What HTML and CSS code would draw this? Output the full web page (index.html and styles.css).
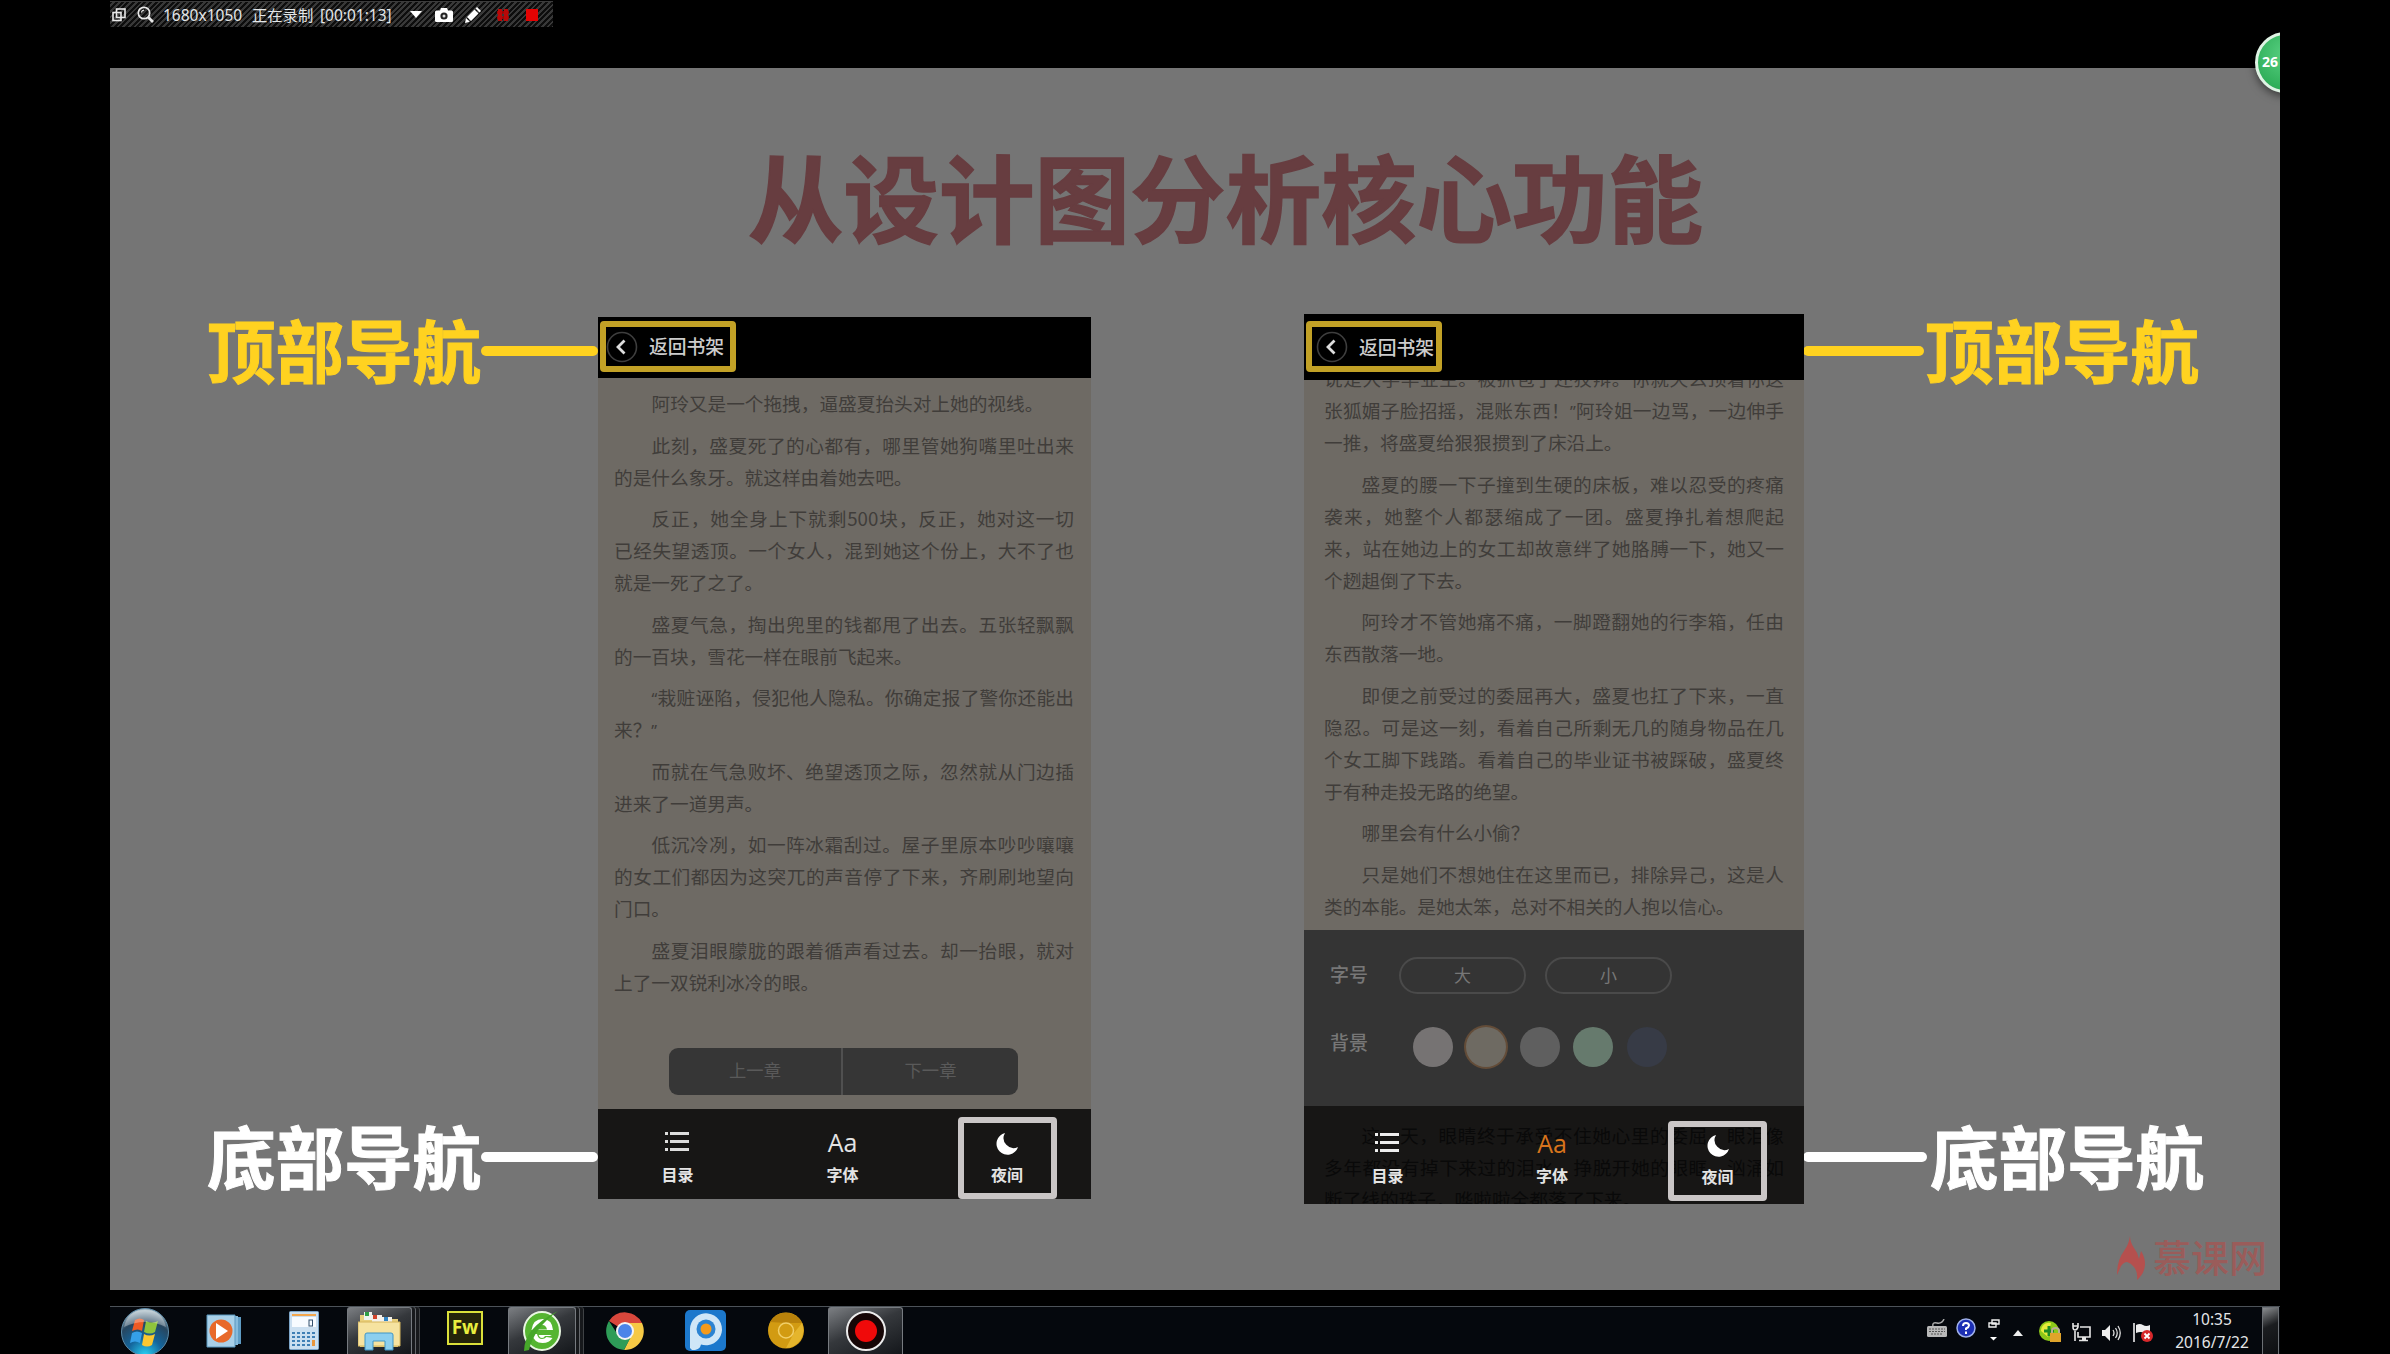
FILE: index.html
```html
<!DOCTYPE html>
<html lang="zh-CN">
<head>
<meta charset="utf-8">
<title>从设计图分析核心功能</title>
<link rel="stylesheet" href="styles.css">
</head>
<body>
<main class="screen">
  <div class="recbar">
    <svg class="rec-restore" viewBox="0 0 14 14" width="14" height="14" fill="none" stroke="#e8e8e8" stroke-width="1.6"><rect x="4.5" y="1" width="8.5" height="8.5"/><rect x="1" y="4.5" width="8" height="8"/></svg>
    <svg class="rec-mag" viewBox="0 0 17 17" width="17" height="17" fill="none" stroke="#e8e8e8"><circle cx="7" cy="7" r="5.7" stroke-width="1.7"/><path d="M4.3 6.5Q5 4.3 7 4.2" stroke-width="1.2"/><path d="M11 11l5 5" stroke-width="2.6"/></svg>
    <span class="rec-size">1680x1050</span>
    <span class="rec-state">正在录制</span>
    <span class="rec-time">[00:01:13]</span>
    <svg class="rec-caret" viewBox="0 0 12 7" width="12" height="7" fill="#fff"><path d="M0 0h12L6 7z"/></svg>
    <svg class="rec-cam" viewBox="0 0 18 14" width="18" height="14"><path fill="#fff" d="M1.5 2.5H5L6 0h6l1 2.500h3.500q1.500 0 1.500 1.500v8.500q0 1.500-1.500 1.500h-15Q0 14 0 12.500V4Q0 2.500 1.500 2.500z"/><circle cx="9" cy="8" r="3.600" fill="#222"/><circle cx="9" cy="8" r="1.500" fill="#ddd"/></svg>
    <svg class="rec-pen" viewBox="0 0 16 16" width="16" height="16" fill="#fff"><path d="M0 16l1-5 3.800 3.800zM2 10l7.500-7.500 4 4L6 14zM10.500 1.500L12 0l4 4-1.500 1.500z"/></svg>
    <svg class="rec-pause" viewBox="0 0 12 12" width="12" height="12" fill="#b80808"><path d="M1 0h4v12H1zM7 0h4v12H7z"/><path d="M0 2h12v3H0zM0 7h12v3H0z" opacity=".8"/></svg>
    <svg class="rec-stop" viewBox="0 0 12 12" width="12" height="12"><rect width="12" height="12" fill="#e40303"/></svg>
  </div>

  <section class="stage">
    <h1 class="title">从设计图分析核心功能</h1>
    <div class="board">
      <div class="notes notes-left">
        <div class="note yellow"><span>顶部导航</span><i class="line"></i></div>
        <div class="note white"><span>底部导航</span><i class="line"></i></div>
      </div>

      <div class="phone phone-a">
        <header class="top">
          <div class="back">
            <svg viewBox="0 0 32 32" width="32" height="32" fill="none"><circle cx="16" cy="16" r="14.500" stroke="#3e3e3e" stroke-width="1.600"/><path d="M18.500 9.500L12 16l6.500 6.500" stroke="#ddd" stroke-width="2.800"/></svg>
            <span>返回书架</span>
          </div>
        </header>
        <article class="text">
          <p><span class="in end">阿玲又是一个拖拽，逼盛夏抬头对上她的视线。</span></p>
          <p><span class="in">此刻，盛夏死了的心都有，哪里管她狗嘴里吐出来</span><span class="end">的是什么象牙。就这样由着她去吧。</span></p>
          <p><span class="in">反正，她全身上下就剩500块，反正，她对这一切</span><span>已经失望透顶。一个女人，混到她这个份上，大不了也</span><span class="end">就是一死了之了。</span></p>
          <p><span class="in">盛夏气急，掏出兜里的钱都甩了出去。五张轻飘飘</span><span class="end">的一百块，雪花一样在眼前飞起来。</span></p>
          <p><span class="in"><i class="q">“</i>栽赃诬陷，侵犯他人隐私。你确定报了警你还能出</span><span class="end">来？<i class="q">”</i></span></p>
          <p><span class="in">而就在气急败坏、绝望透顶之际，忽然就从门边插</span><span class="end">进来了一道男声。</span></p>
          <p><span class="in">低沉冷冽，如一阵冰霜刮过。屋子里原本吵吵嚷嚷</span><span>的女工们都因为这突兀的声音停了下来，齐刷刷地望向</span><span class="end">门口。</span></p>
          <p><span class="in">盛夏泪眼朦胧的跟着循声看过去。却一抬眼，就对</span><span class="end">上了一双锐利冰冷的眼。</span></p>
        </article>
        <div class="pager"><span>上一章</span><span>下一章</span></div>
        <nav class="tabs">
          <div class="tab"><svg viewBox="0 0 24 19" width="24" height="19" fill="#ddd"><path d="M0 0h3v3H0zM5 0h19v3H5zM0 8h3v3H0zM5 8h19v3H5zM0 16h3v3H0zM5 16h19v3H5z"/></svg><b>目录</b></div>
          <div class="tab"><em>Aa</em><b>字体</b></div>
          <div class="tab"><div class="frame"><svg viewBox="0 0 22 22" width="22" height="22" fill="#fff"><path d="M9 0A11 11 0 1 0 22 14A10 10 0 0 1 9 0z"/></svg><b>夜间</b></div></div>
        </nav>
      </div>

      <div class="phone phone-b">
        <header class="top">
          <div class="back">
            <svg viewBox="0 0 32 32" width="32" height="32" fill="none"><circle cx="16" cy="16" r="14.500" stroke="#3e3e3e" stroke-width="1.600"/><path d="M18.500 9.500L12 16l6.500 6.500" stroke="#ddd" stroke-width="2.800"/></svg>
            <span>返回书架</span>
          </div>
        </header>
        <article class="text">
          <p><span>说是大学毕业生。被抓包了还狡辩。你就天么顶着你这</span><span>张狐媚子脸招摇，混账东西！<i class="q">”</i>阿玲姐一边骂，一边伸手</span><span class="end">一推，将盛夏给狠狠掼到了床沿上。</span></p>
          <p><span class="in">盛夏的腰一下子撞到生硬的床板，难以忍受的疼痛</span><span>袭来，她整个人都瑟缩成了一团。盛夏挣扎着想爬起</span><span>来，站在她边上的女工却故意绊了她胳膊一下，她又一</span><span class="end">个趔趄倒了下去。</span></p>
          <p><span class="in">阿玲才不管她痛不痛，一脚蹬翻她的行李箱，任由</span><span class="end">东西散落一地。</span></p>
          <p><span class="in">即便之前受过的委屈再大，盛夏也扛了下来，一直</span><span>隐忍。可是这一刻，看着自己所剩无几的随身物品在几</span><span>个女工脚下践踏。看着自己的毕业证书被踩破，盛夏终</span><span class="end">于有种走投无路的绝望。</span></p>
          <p><span class="in end">哪里会有什么小偷？</span></p>
          <p><span class="in">只是她们不想她住在这里而已，排除异己，这是人</span><span class="end">类的本能。是她太笨，总对不相关的人抱以信心。</span></p>
        </article>
        <div class="panel">
          <div class="prow"><b>字号</b><div class="pills"><span>大</span><span>小</span></div></div>
          <div class="prow"><b class="bg-label">背景</b><div class="dots"><i class="d1"></i><i class="d2"></i><i class="d3"></i><i class="d4"></i><i class="d5"></i></div></div>
        </div>
        <nav class="tabs">
          <div class="ghost"><span class="in">这一天，眼睛终于承受不住她心里的委屈，眼泪像</span><span>多年都没有掉下来过的泪水，挣脱开她的眼眶，汹涌如</span><span class="end">断了线的珠子，哗啦啦全都落了下来。</span></div>
          <div class="tab"><svg viewBox="0 0 24 19" width="24" height="19" fill="#eee"><path d="M0 0h3v3H0zM5 0h19v3H5zM0 8h3v3H0zM5 8h19v3H5zM0 16h3v3H0zM5 16h19v3H5z"/></svg><b>目录</b></div>
          <div class="tab"><em class="on">Aa</em><b>字体</b></div>
          <div class="tab"><div class="frame"><svg viewBox="0 0 22 22" width="22" height="22" fill="#fff"><path d="M9 0A11 11 0 1 0 22 14A10 10 0 0 1 9 0z"/></svg><b>夜间</b></div></div>
        </nav>
      </div>

      <div class="notes notes-right">
        <div class="note yellow"><i class="line"></i><span>顶部导航</span></div>
        <div class="note white"><i class="line"></i><span>底部导航</span></div>
      </div>
    </div>
    <div class="brand">
      <svg viewBox="0 0 28 44" width="28" height="44" fill="#b5504e"><path d="M13 0q-1 8-6 15-7 9-7 24l4-9q3-4 6-4 4 1 7 5 4 5 3 13 8-7 8-16 0-7-4-13l-2 8q-1-6-5-11-4-6-4-12z"/></svg>
      <span>慕课网</span>
    </div>
  </section>

  <div class="badge">26</div>

  <footer class="taskbar">
    <div class="apps">
      <div class="app orb"><svg viewBox="0 0 50 48" width="50" height="48">
        <defs><radialGradient id="orb" cx=".5" cy="1" r=".95"><stop offset="0" stop-color="#27d3f5"/><stop offset=".4" stop-color="#14659c"/><stop offset=".75" stop-color="#27465f"/><stop offset="1" stop-color="#a9bcc6"/></radialGradient></defs>
        <circle cx="25" cy="25" r="23.500" fill="url(#orb)" stroke="#5d8ba8"/>
        <path d="M15 13q5-3 9 0l-2 11q-4-3-10 0z" fill="#ee5a24"/><path d="M26 14q6 3 12 0l-3 11q-5 3-11 0z" fill="#8fc43c"/><path d="M12 26q5-3 10 0l-2 10q-5-3-10 0z" fill="#35a0e8"/><path d="M24 27q5 3 11 0l-3 11q-5 3-10 0z" fill="#fbc730"/>
        <path d="M4 20Q8 3 25 3t21 17Q25 10 4 20z" fill="#fff" opacity=".3"/></svg></div>
      <div class="app wmp"><svg viewBox="0 0 36 34" width="36" height="34"><path d="M8 3h27v27H8z" fill="#5f9cc4"/><path d="M5 2h27v29H5z" fill="#86bbdc"/><path d="M1 1h28v32H1z" fill="#a9d0e8" stroke="#5b98bf"/><circle cx="15" cy="17" r="11.500" fill="#e8692a"/><path d="M10 9l12 8-12 8z" fill="#fff"/></svg></div>
      <div class="app calc"><svg viewBox="0 0 30 39" width="30" height="39"><rect x=".5" y=".5" width="29" height="38" rx="1" fill="#cbdff0" stroke="#7da6c9"/><path d="M3 3h24v2H3z" fill="#f3a64c"/><path d="M3 6h24v10H3z" fill="#f7fbff"/><rect x="20" y="9" width="3.500" height="6" fill="none" stroke="#33506e"/><path d="M3 21h3v2H3zM8 21h3v2H8zM13 21h3v2h-3zM18 21h3v2h-3zM23 21h3v2h-3zM3 25h3v2H3zM8 25h3v2H8zM13 25h3v2h-3zM18 25h3v2h-3zM23 25h3v2h-3zM3 29h3v2H3zM8 29h3v2H8zM13 29h3v2h-3zM18 29h3v2h-3zM3 33h3v2H3zM8 33h3v2H8zM13 33h3v2h-3zM18 33h3v2h-3z" fill="#3f7fb5"/><path d="M23 29h3v6h-3z" fill="#e8963c"/></svg></div>
      <div class="app task explorer"><svg viewBox="0 0 44 40" width="44" height="40"><path d="M2 4h14l2 4h22v28H2z" fill="#e9cf7b"/><path d="M6 1h8v8H6z" fill="#eef3ee"/><path d="M7 1h4v4H7z" fill="#2f9e44"/><path d="M14 4h10v8H14z" fill="#f4f1ea"/><path d="M15 4h4v4h-4z" fill="#d2452c"/><path d="M24 6h10v8H24z" fill="#f4f1ea"/><path d="M26 6h4v4h-4z" fill="#3083c2"/><path d="M0 11h42v24H0z" fill="#f6e3a0" stroke="#d6b65c"/><path d="M7 39V24q0-2 2-2h24q2 0 2 2v15h-8v-9H15v9z" fill="#8ccfef" stroke="#4196c6"/></svg></div>
      <div class="app fw"><span>Fw</span></div>
      <div class="app task browser"><svg viewBox="0 0 40 42" width="40" height="42"><ellipse cx="20" cy="21" rx="18" ry="19" fill="#55b531" stroke="#e9f7e2" stroke-width="2"/><path d="M9.500 20Q11 9 20.500 9T31 20zM9.500 23H31q-1 3-3 3h-5q-1 2-3 2t-3-2l-1-3zM10 24q2 9 10.500 9 7 0 10-5l-6-1q-2 2-4.500 2-4 0-5-5z" fill="#fff"/><path d="M16 19.500h9q-1-4.500-4.500-4.500T16 19.500zM16 23h15v2H16z" fill="#55b531"/><path d="M2 41Q2 18 36 1 12 18 7 40z" fill="#46a72a"/></svg></div>
      <div class="app chrome"><svg viewBox="0 0 38 38" width="38" height="38"><path d="M19 19L3 9A19 19 0 0 1 36 11H19z" fill="#d8473c"/><path d="M36 11A19 19 0 0 1 18 38L26 22 19 11z" fill="#f6c945"/><path d="M3 9A19 19 0 0 0 18 38L26 23H12z" fill="#2e9c57"/><circle cx="19" cy="19" r="9" fill="#f3f3f3"/><circle cx="19" cy="19" r="7" fill="#4a84e8"/></svg></div>
      <div class="app pp"><svg viewBox="0 0 41 41" width="41" height="41"><rect width="41" height="41" rx="5" fill="#1c78cc"/><path d="M5 38V19A16 16 0 1 1 16 34.500Q15 39 10 40H7z" fill="#cfe6f7"/><circle cx="21" cy="19" r="9.500" fill="#2b83d2"/><circle cx="21" cy="19" r="5.500" fill="#f49a1c"/></svg></div>
      <div class="app gold"><svg viewBox="0 0 36 37" width="36" height="37"><circle cx="18" cy="18.500" r="18" fill="#d29b12"/><path d="M2 10A18 18 0 0 1 34 11H18z" fill="#b9820b"/><path d="M34 11a18 18 0 0 1-16 25l8-15z" fill="#e5b52c"/><circle cx="18" cy="18.500" r="7.500" fill="#d29b12" stroke="#f1cf69" stroke-width="1.500"/></svg></div>
      <div class="app task recorder"><svg viewBox="0 0 42 42" width="42" height="42"><circle cx="21" cy="21" r="19" fill="#160606" stroke="#ececec" stroke-width="2"/><circle cx="21" cy="21" r="11" fill="#f00a0a"/></svg></div>
    </div>
    <div class="tray">
      <svg class="t-key" viewBox="0 0 20 18" width="20" height="18"><path d="M6 7q-1-4 4-3t7-4" fill="none" stroke="#aaa" stroke-width="1.500"/><rect y="7" width="20" height="11" rx="1.500" fill="#b9b9b9"/><path d="M2 10h16M2 12.500h16M4 15h12" stroke="#555" stroke-dasharray="2 1"/></svg>
      <svg class="t-help" viewBox="0 0 20 20" width="20" height="20"><circle cx="10" cy="10" r="9" fill="#1c2fb4" stroke="#9fb0ea" stroke-width="1.500"/><path d="M7 8q0-3 3-3t3 2.500Q13 9 10 10.500V12M10 13.500V16" fill="none" stroke="#fff" stroke-width="2"/></svg>
      <svg class="t-lang" viewBox="0 0 12 22" width="12" height="22" fill="none" stroke="#eee" stroke-width="1.400"><path d="M4 1h7v4H4zM1 4h7v4H1z"/><path d="M2 18h7l-3.500 3.500z" fill="#fff" stroke="none"/></svg>
      <svg class="t-up" viewBox="0 0 10 6" width="10" height="6" fill="#eee"><path d="M5 0l5 6H0z"/></svg>
      <svg class="t-safe" viewBox="0 0 22 21" width="22" height="21"><circle cx="10" cy="10" r="10" fill="#8cc819"/><path d="M2 10A8 8 0 0 1 12 2L9 16z" fill="#e7ec3a"/><path d="M5 10h10M10 5v10" stroke="#1d8b24" stroke-width="3"/><rect x="11" y="12" width="11" height="9" fill="#e0a42b"/><path d="M13 12V9.500q0-2.500 3.500-2.500T20 9.500V12" fill="none" stroke="#b8ae92" stroke-width="2"/></svg>
      <svg class="t-net" viewBox="0 0 19 19" width="19" height="19" fill="none" stroke="#e6e6e6" stroke-width="1.600"><path d="M8 4h10v10H6V9M3 8v10M1 0v4q0 3 2 3t3-3V0M1 3h5M7 17.500h9"/><path d="M12 14v3" stroke-width="4"/></svg>
      <svg class="t-vol" viewBox="0 0 19 18" width="19" height="18"><path d="M0 6h3l5-5v16l-5-5H0z" fill="#eee"/><path d="M11 6q2 3 0 6M13.500 4q3.500 5 0 10M16 2q4.500 7 0 14" fill="none" stroke="#ddd" stroke-width="1.300"/></svg>
      <svg class="t-flag" viewBox="0 0 20 19" width="20" height="19"><path d="M1 0v19" stroke="#eee" stroke-width="1.600"/><path d="M3 2q4-2 7 0t7 0v8q-3 2-6 0t-8 0z" fill="#eee"/><circle cx="14" cy="13" r="6" fill="#d7282b"/><path d="M11.500 10.500l5 5m0-5l-5 5" stroke="#fff" stroke-width="1.800"/></svg>
      <div class="clock"><span>10:35</span><span>2016/7/22</span></div>
      <div class="peek"></div>
    </div>
  </footer>
</main>
</body>
</html>
```
FILE: styles.css
```css
* { box-sizing: border-box; }
body {
  margin: 0;
  background: #000;
  font-family: "Noto Sans", "Noto Sans CJK SC", sans-serif;
  color: #fff;
}
svg { display: block; flex: none; }
i, em { font-style: normal; }

.screen {
  position: relative;
  width: 2170px;
  height: 1354px;
  margin-left: 110px;
  overflow: hidden;
  display: flex;
  flex-direction: column;
}

/* recorder strip */
.recbar {
  width: 443px;
  height: 26px;
  margin: 1px 0 41px;
  padding-left: 2px;
  display: flex;
  align-items: center;
  flex: none;
  white-space: nowrap;
  font-size: 15.5px;
  line-height: 26px;
  color: #e2e6e8;
  border-top: 1px solid #3c3c3c;
  background: repeating-linear-gradient(135deg, #0d0d0d 0 2px, #383838 2px 4px);
}
.rec-mag { margin-left: 11px; }
.rec-size { width: 80px; margin-left: 9px; }
.rec-state { width: 62px; margin: -2px 0 0 9px; font: 15.3px/26px "Noto Sans CJK SC", sans-serif; }
.rec-time { width: 72px; margin-left: 6px; }
.rec-caret { margin-left: 18px; }
.rec-cam { margin-left: 13px; }
.rec-pen { margin-left: 12px; }
.rec-pause { margin-left: 16px; }
.rec-stop { margin-left: 17px; }

/* slide */
.stage {
  position: relative;
  height: 1222px;
  flex: none;
  background: #757575;
  overflow: hidden;
  font-family: "Noto Sans CJK SC", sans-serif;
}
.title {
  margin: 79px 0 0;
  padding-left: 61px;
  text-align: center;
  height: 96px;
  font-size: 95.5px;
  line-height: 96px;
  font-weight: 700;
  color: #673d40;
  -webkit-text-stroke: 1.5px #673d40;
  white-space: nowrap;
}
.board {
  display: grid;
  grid-template-columns: 390px 493px 213px 500px auto;
  align-items: start;
  padding: 70px 0 0 98px;
}
.phone-a { grid-column: 2; }
.phone-b { grid-column: 4; }
.notes {
  margin-top: 3px;
  height: 875px;
  display: flex;
  flex-direction: column;
  justify-content: space-between;
}
.note {
  display: flex;
  align-items: center;
  height: 69px;
  font-size: 68.500px;
  line-height: 69px;
  font-weight: 700;
  white-space: nowrap;
}
.note span { padding-bottom: 5px; -webkit-text-stroke: 1px currentColor; }
.notes-left .note span { margin-left: -1px; }
.line { height: 10px; border-radius: 5px; background: currentColor; }
.notes-left .line { flex: 1; }
.notes-right .line { width: 121px; margin: 0 1px 0 -1px; }
.notes-right .white .line { width: 124px; margin-right: 3px; }
.yellow { color: #ffd220; }
.white { color: #fff; }

.phone {
  display: flex;
  flex-direction: column;
  background: #6e6a64;
  overflow: hidden;
}
.phone-a { height: 882px; margin-top: 4px; }
.phone-b { height: 890px; margin-top: 1px; }
.top { background: #000; flex: none; position: relative; }
.phone-a .top { height: 61px; padding: 4px 2px; }
.phone-b .top { height: 66px; padding: 7px 2px; }
.back {
  width: 136px;
  height: 51px;
  border: 6px solid #c2a126;
  border-radius: 4px;
  display: flex;
  align-items: center;
  font-size: 18.800px;
  line-height: 30px;
  font-weight: 500;
  color: #ccc;
  white-space: nowrap;
}
.back span { margin: -1px 0 0 11px; }
.phone-b .back svg { margin-left: 4px; }
.phone-b .back span { margin: 1px 0 0 11px; }
.text {
  flex: none;
  width: 460px;
  margin-left: 16px;
  font-size: 18.670px;
  line-height: 32px;
  color: #403d3a;
}
.phone-a .text { margin-top: 9px; height: 661px; }
.phone-b .text { margin: -18px 0 0 20px; height: 568px; }
.text p { margin: 0 0 9.500px; }
.text span, .ghost span {
  display: block;
  height: 32px;
  white-space: nowrap;
  text-align-last: justify;
  text-justify: inter-character;
}
.text .in, .ghost .in { padding-left: 37.500px; }
.text .end, .ghost .end { text-align-last: left; }
.q { font-family: "Noto Sans", sans-serif; font-size: 16px; line-height: 20px; }

.pager {
  width: 349px;
  height: 47px;
  margin: 0 0 14px 71px;
  display: grid;
  grid-template-columns: 172px 1fr;
  border-radius: 9px;
  background: #363636;
  overflow: hidden;
  font-size: 17.300px;
  line-height: 44px;
  color: #5a5a5a;
  text-align: center;
  flex: none;
}
.pager span + span { border-left: 2px solid #505050; }

.tabs {
  position: relative;
  flex: 1;
  display: grid;
  background: #171615;
  color: #e4e4e4;
}
.phone-a .tabs { grid-template-columns: 159px 171px 159px; }
.phone-b .tabs { grid-template-columns: 167px 162px 169px; }
.tab {
  position: relative;
  display: flex;
  flex-direction: column;
  align-items: center;
  padding-top: 23px;
}
.phone-b .tab { padding-top: 27px; }
.tab svg { position: relative; left: -1px; }
.tab b {
  font-size: 16px;
  line-height: 24px;
  font-weight: 700;
  margin-top: 11px;
}
.tab em {
  height: 19px;
  font: 25px/20px "Open Sans", sans-serif;
}
.tab .on { color: #d8741c; }
.tab:last-child { padding-top: 8px; }
.phone-b .tab:last-child { padding-top: 15px; }
.frame {
  width: 99px;
  height: 82px;
  border: 6px solid #cac6c6;
  border-radius: 4px;
  display: flex;
  flex-direction: column;
  align-items: center;
  padding-top: 10px;
}
.phone-a .frame { margin-left: -1px; }
.phone-b .frame { height: 80px; padding-top: 8px; }
.frame svg { left: 0; }
.frame b { margin-top: 7px; }
.ghost {
  position: absolute;
  left: 20px;
  top: 13px;
  width: 460px;
  height: 85px;
  overflow: hidden;
  font-size: 18.670px;
  line-height: 32px;
  color: #090909;
}

.panel {
  height: 176px;
  flex: none;
  background: #343434;
  padding: 27px 0 0 26px;
  color: #777;
}
.prow { display: flex; align-items: center; height: 37px; }
.prow b { width: 69px; font-size: 19px; font-weight: 500; line-height: 28px; margin-top: -4px; }
.pills { display: flex; gap: 19px; }
.pills span {
  width: 127px;
  height: 37px;
  border: 2px solid #4a4a4a;
  border-radius: 19px;
  text-align: center;
  font-size: 17px;
  line-height: 31px;
}
.prow + .prow { margin-top: 33px; height: 40px; }
.prow .bg-label { margin-top: -11px; width: 83px; }
.dots { display: flex; gap: 13.400px; }
.dots i { width: 40px; height: 40px; border-radius: 50%; }
.d1 { background: #767373; }
.d2 { background: #6e6a62; box-shadow: 0 0 0 2px #634c38; }
.d3 { background: #5f5f5f; }
.d4 { background: #667a6d; }
.d5 { background: #373b46; }

.brand {
  position: absolute;
  left: 2007px;
  top: 1168px;
  display: flex;
  align-items: center;
  gap: 8px;
  font-size: 38px;
  line-height: 44px;
  font-weight: 500;
  color: #9a5c5a;
  white-space: nowrap;
}
.brand span { margin-top: -4px; }

.badge {
  position: absolute;
  left: 2145px;
  top: 32px;
  width: 61px;
  height: 61px;
  border: 3px solid #dff3e4;
  border-radius: 50%;
  background: radial-gradient(circle at 50% 35%, #58d081, #2fae59 75%, #238045);
  box-shadow: 0 3px 8px rgba(0, 0, 0, .5);
  padding-left: 4px;
  font: 700 14px/54px "Noto Sans", sans-serif;
}

/* taskbar */
.taskbar {
  height: 48px;
  margin-top: 16px;
  flex: none;
  display: flex;
  justify-content: space-between;
  background: #05080d;
  border-top: 1px solid #4c5258;
}
.apps, .tray { display: flex; align-items: center; }
.app { height: 47px; display: flex; align-items: center; justify-content: center; flex: none; }
.orb { width: 50px; margin-left: 10px; }
.wmp { width: 36px; margin-left: 36px; }
.calc { width: 30px; margin-left: 47px; padding-bottom: 1px; }
.task {
  border: 1px solid #777b80;
  border-bottom: 0;
  border-radius: 3px 3px 0 0;
  background: linear-gradient(155deg, #7b7e82, #35383c 45%, #14171b);
}
.explorer { width: 65px; margin-left: 28px; }
.explorer, .browser { box-shadow: 3px 0 0 #17191c, 4px 0 0 #63666a, 7px 0 0 #17191c, 8px 0 0 #3f4245; }
.fw { width: 36px; margin-left: 35px; }
.fw span {
  width: 36px;
  height: 34px;
  margin-top: -5px;
  border: 2px solid #dbe03a;
  background: #25240a;
  color: #e9ee3f;
  text-align: center;
  font: 700 19px/29px "Open Sans", sans-serif;
}
.browser { width: 68px; margin-left: 25px; }
.chrome { width: 38px; margin-left: 30px; }
.pp { width: 41px; margin-left: 41px; }
.gold { width: 36px; margin-left: 42px; }
.recorder { width: 75px; margin-left: 24px; }

.t-key { margin-top: -6px; }
.t-help { margin-left: 9px; margin-top: -5px; }
.t-lang { margin-left: 12px; margin-top: -2px; }
.t-up { margin-left: 13px; margin-top: 4px; }
.t-safe { margin-left: 16px; margin-top: 2px; }
.t-net { margin-left: 11px; margin-top: 4px; }
.t-vol { margin-left: 11px; margin-top: 4px; }
.t-flag { margin-left: 12px; margin-top: 4px; }
.clock {
  width: 78px;
  margin-left: 20px;
  display: flex;
  flex-direction: column;
  text-align: center;
  font: 15.500px/23px "Noto Sans", sans-serif;
  color: #e4e6e8;
}
.peek {
  width: 17px;
  height: 47px;
  margin: 0 1px 0 11px;
  border: 1px solid #6c7075;
  border-bottom: 0;
  background: linear-gradient(155deg, #8a8d90, #1b1d20 40%, #0d0f12);
}
```
